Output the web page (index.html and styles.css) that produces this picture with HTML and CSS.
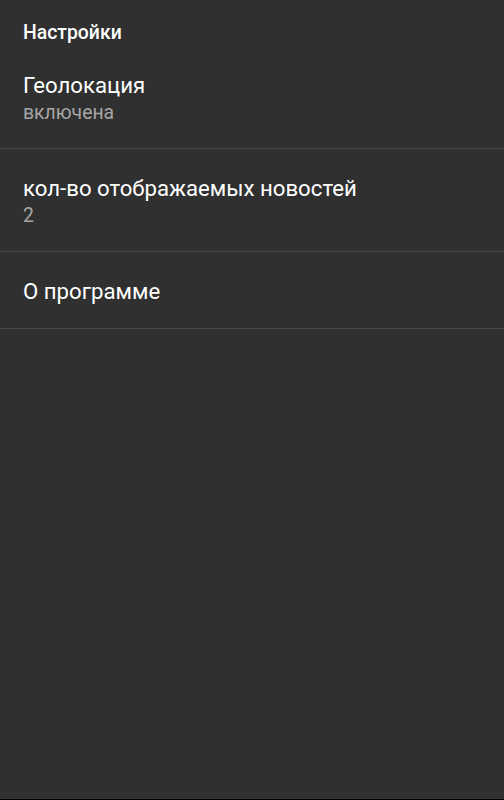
FILE: index.html
```html
<!DOCTYPE html>
<html lang="ru">
<head>
<meta charset="utf-8">
<link rel="stylesheet" href="styles.css">
</head>
<body>
<div class="screen">
  <div class="header">Настройки</div>
  <div class="item">
    <div class="title">Геолокация</div>
    <div class="summary">включена</div>
  </div>
  <div class="divider"></div>
  <div class="item">
    <div class="title">кол-во отображаемых новостей</div>
    <div class="summary">2</div>
  </div>
  <div class="divider"></div>
  <div class="item single">
    <div class="title">О программе</div>
  </div>
  <div class="divider"></div>
</div>
</body>
</html>
```
FILE: styles.css
```css
html, body {
  margin: 0;
  padding: 0;
  background: #303030;
}
.screen {
  width: 504px;
  height: 799px;
  border-bottom: 1px solid #000;
  background: #303030;
  font-family: Roboto, "Noto Sans", sans-serif;
  color: #ffffff;
  display: flex;
  flex-direction: column;
}
.header {
  height: 46px;
  box-sizing: border-box;
  padding: 20px 23px 0;
  font-size: 19.4px;
  font-weight: 500;
  line-height: 26px;
}
.item {
  height: 102px;
  box-sizing: border-box;
  padding: 25px 23px 0;
  display: flex;
  flex-direction: column;
}
.item.single {
  height: 76px;
}
.title {
  font-size: 22.2px;
  line-height: 28px;
}
.summary {
  font-size: 19.4px;
  line-height: 28px;
  color: #a6a6a6;
}
.divider {
  height: 1px;
  background: #4a4a4a;
}
```
